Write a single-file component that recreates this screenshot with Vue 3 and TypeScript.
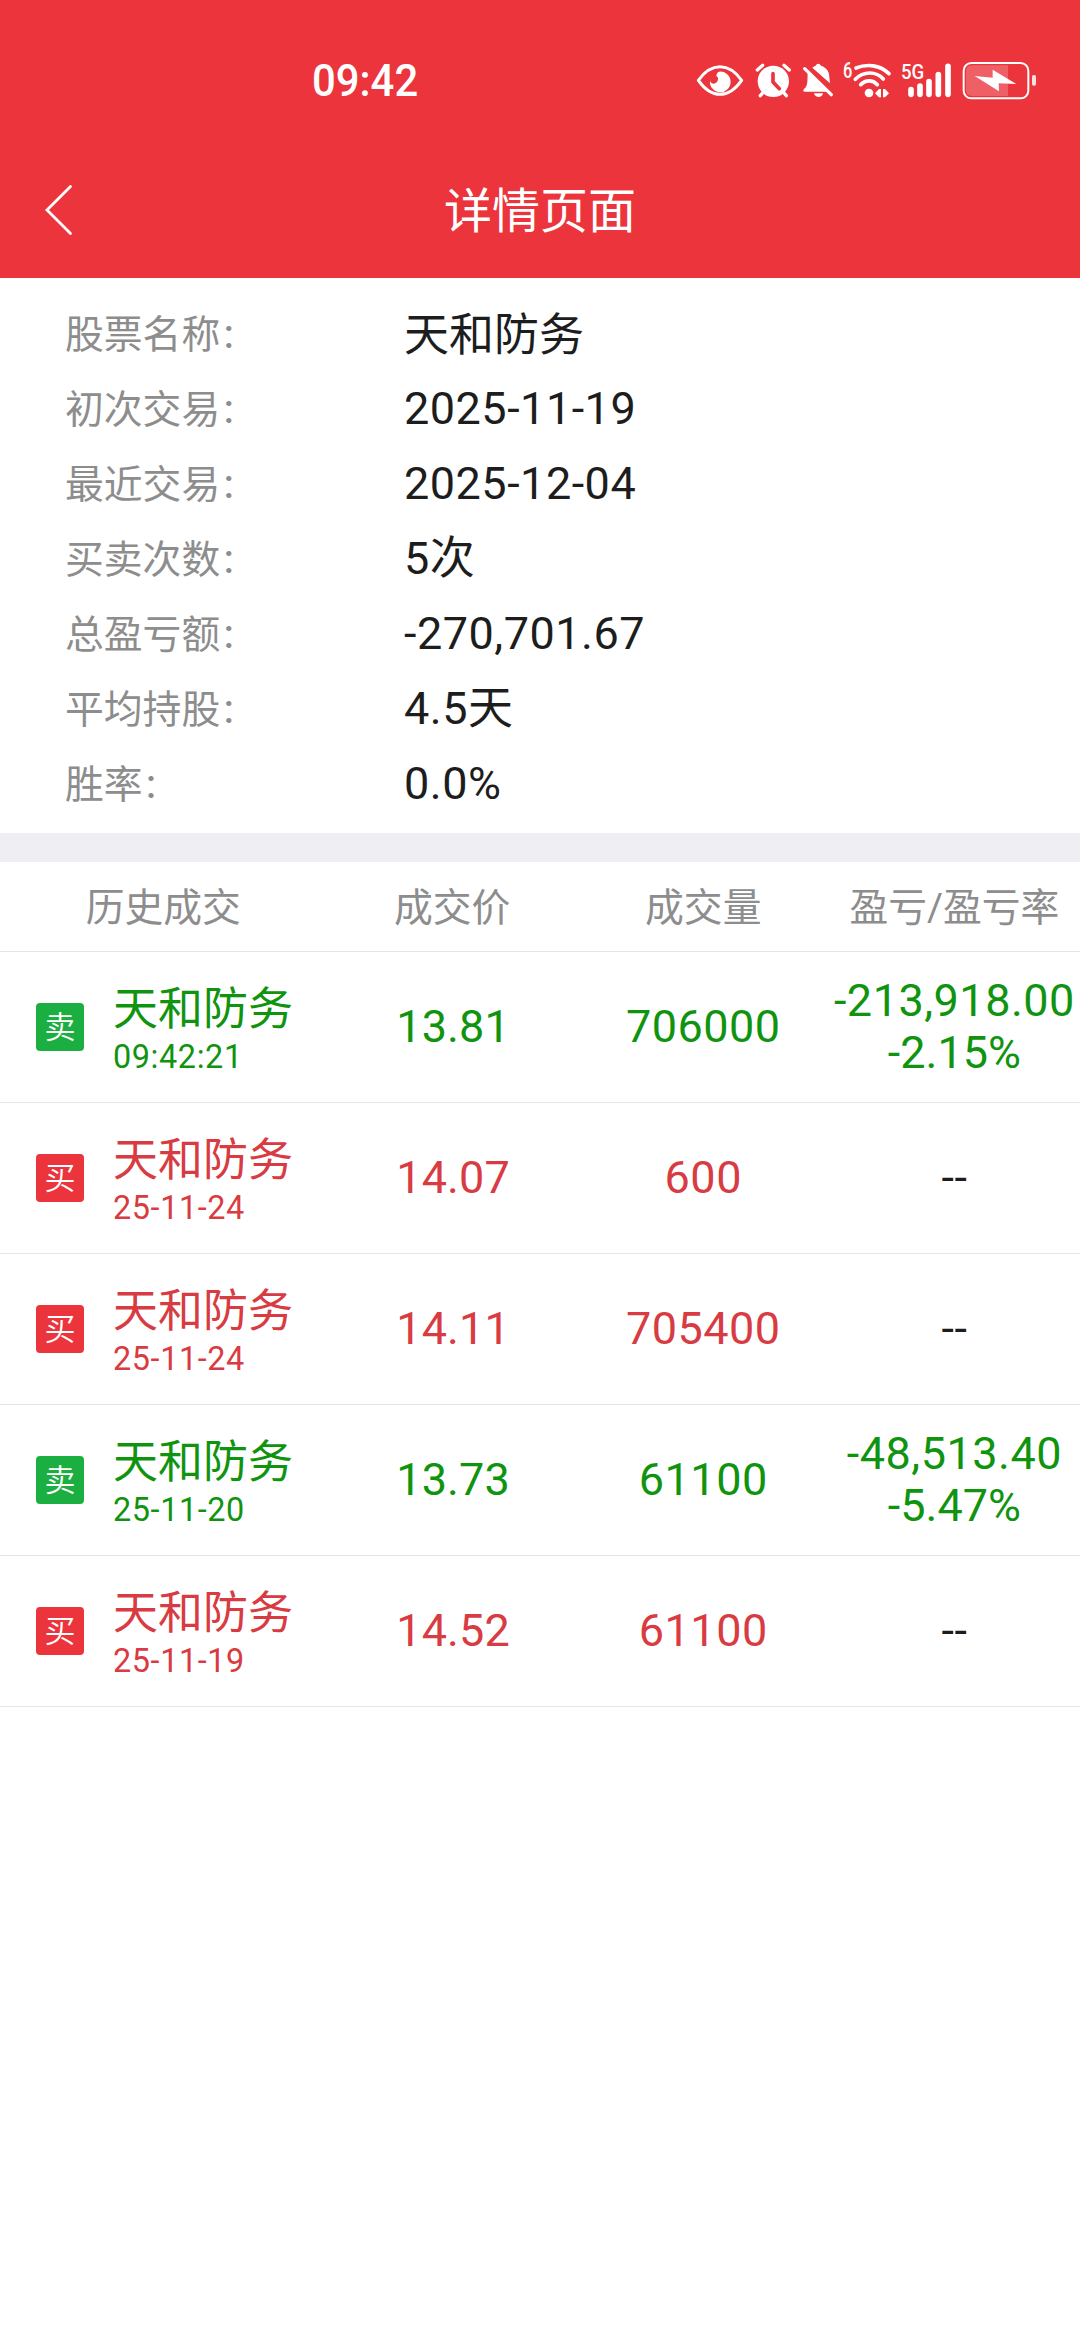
<script setup lang="ts">
interface InfoItem {
  label: string
  value: string
  han?: boolean
}

interface Trade {
  side: 'buy' | 'sell'
  name: string
  time: string
  price: string
  volume: string
  profit?: string
  rate?: string
}

const info: InfoItem[] = [
  { label: '股票名称', value: '天和防务', han: true },
  { label: '初次交易', value: '2025-11-19' },
  { label: '最近交易', value: '2025-12-04' },
  { label: '买卖次数', value: '5次' },
  { label: '总盈亏额', value: '-270,701.67' },
  { label: '平均持股', value: '4.5天' },
  { label: '胜率', value: '0.0%' },
]

const columns: string[] = ['历史成交', '成交价', '成交量', '盈亏/盈亏率']

const trades: Trade[] = [
  { side: 'sell', name: '天和防务', time: '09:42:21', price: '13.81', volume: '706000', profit: '-213,918.00', rate: '-2.15%' },
  { side: 'buy', name: '天和防务', time: '25-11-24', price: '14.07', volume: '600' },
  { side: 'buy', name: '天和防务', time: '25-11-24', price: '14.11', volume: '705400' },
  { side: 'sell', name: '天和防务', time: '25-11-20', price: '13.73', volume: '61100', profit: '-48,513.40', rate: '-5.47%' },
  { side: 'buy', name: '天和防务', time: '25-11-19', price: '14.52', volume: '61100' },
]
</script>

<template>
  <div class="screen">
    <header class="top">
      <div class="status">
        <span class="clock">09:42</span>
        <div class="icons">
          <svg class="eye" viewBox="48 60 144 124">
            <path d="M55 121 C74 94 96 80 120 80 C144 80 166 94 185 121 C166 148 144 163 120 163 C96 163 74 148 55 121Z" fill="none" stroke="#fff" stroke-width="9" stroke-linejoin="round" />
            <path d="M117 95 A31 31 0 1 1 90 122 C93 132 103 134 110 127 C117 119 115 111 109 109 C109 103 111 98 117 95Z" fill="#fff" />
          </svg>
          <svg class="alarm" viewBox="224 60 110 124">
            <circle cx="279" cy="124" r="47" fill="#fff" />
            <path d="M231 90 L247 76 M327 90 L311 76 M250 156 L240 167 M308 156 L318 167" stroke="#fff" stroke-width="10" stroke-linecap="round" />
            <path d="M278 101 V126 L297 146" fill="none" stroke="#eb343b" stroke-width="11" stroke-linecap="round" stroke-linejoin="round" />
          </svg>
          <svg class="bell" viewBox="366 60 96 124">
            <path d="M397 83 C401 79 404 78 407 77 C410 69 420 69 423 77 C441 83 448 96 448 112 L450 130Z" fill="#fff" />
            <path d="M383 98 L440 155 H374 C367 154 370 147 376 143 C384 135 382 116 383 98Z" fill="#fff" />
            <path d="M402 160 H429 C426 175 406 175 402 160Z" fill="#fff" />
            <path d="M374 86 L454 164" stroke="#fff" stroke-width="10" stroke-linecap="round" />
          </svg>
          <svg class="wifi" viewBox="486 60 150 124">
            <text x="489" y="114" font-size="64" textLength="28" lengthAdjust="spacingAndGlyphs" class="tag">6</text>
            <g fill="none" stroke="#fff" stroke-width="11" stroke-linecap="round">
              <path d="M528 84 C560 71 600 74 627 101" />
              <path d="M526 118 C550 93 588 93 610 117" />
              <path d="M542 134 C557 119 578 119 592 134" />
            </g>
            <circle cx="567" cy="159" r="13" fill="#fff" />
            <path d="M585 160 L597 147 H603 V172 H597Z M627 160 L615 172 H609 V147 H615Z" fill="#fff" />
          </svg>
          <svg class="signal" viewBox="660 60 156 124">
            <text x="663" y="118" font-size="63" textLength="70" lengthAdjust="spacingAndGlyphs" class="tag">5G</text>
            <path d="M693 149 V163 M720 138 V163 M747 125 V163 M775 104 V163 M804 79 V163" stroke="#fff" stroke-width="17" stroke-linecap="round" />
          </svg>
          <svg class="battery" viewBox="846 60 224 124">
            <path d="M984 76 V168 H876 Q858 168 858 150 V94 Q858 76 876 76Z" fill="#fff" fill-opacity=".22" />
            <rect x="851" y="69" width="194" height="106" rx="23" fill="none" stroke="#fff" stroke-width="6" />
            <rect x="1056" y="105" width="12" height="32" rx="5" fill="#fff" fill-opacity=".85" />
            <path d="M884 108 L938 113 L938 89 L1009 132 L956 130 L957 154Z" fill="#fff" />
          </svg>
        </div>
      </div>
      <div class="nav">
        <svg class="back" viewBox="0 0 30 54">
          <path d="M26.5 3.5 L3 27 L26.5 50.5" fill="none" stroke="#fff" stroke-width="2.8" stroke-linecap="round" />
        </svg>
        <h1 class="title">详情页面</h1>
      </div>
    </header>

    <dl class="info">
      <div v-for="item in info" :key="item.label" class="info-row">
        <dt>{{ item.label }}<span class="colon">：</span></dt>
        <dd :class="{ han: item.han }">{{ item.value }}</dd>
      </div>
    </dl>

    <div class="divider"></div>

    <section class="table">
      <div class="row head">
        <span v-for="c in columns" :key="c">{{ c }}</span>
      </div>
      <div v-for="(t, i) in trades" :key="i" class="row item" :class="t.side">
        <div class="stock">
          <span class="badge">{{ t.side === 'sell' ? '卖' : '买' }}</span>
          <div class="stock-text">
            <span class="name">{{ t.name }}</span>
            <span class="time">{{ t.time }}</span>
          </div>
        </div>
        <span class="num price">{{ t.price }}</span>
        <span class="num">{{ t.volume }}</span>
        <div v-if="t.profit" class="num profit">
          <span>{{ t.profit }}</span>
          <span class="rate">{{ t.rate }}</span>
        </div>
        <span v-else class="num none">--</span>
      </div>
    </section>
  </div>
</template>

<style>
body {
  margin: 0;
  background: #fff;
}
</style>

<style scoped>
.screen {
  width: 1080px;
  height: 2340px;
  overflow: hidden;
  background: #fff;
  color: #1d1d1d;
  font-family: Roboto, 'Noto Sans CJK SC', sans-serif;
}

.top {
  height: 278px;
  background: #eb343b;
  color: #fff;
}

.status {
  display: flex;
  align-items: center;
  justify-content: space-between;
  height: 142px;
  padding: 20px 43px 0 312px;
  box-sizing: border-box;
}

.clock {
  font-size: 45px;
  font-weight: 500;
  line-height: 60px;
  transform: scaleX(0.93);
  transform-origin: left;
}

.icons {
  display: flex;
  align-items: center;
}

.icons svg {
  height: 41.33px;
  overflow: visible;
}

.tag {
  fill: #fff;
  font-family: Roboto, sans-serif;
  font-weight: 500;
}

.eye { width: 48px; }
.alarm { width: 36.67px; margin-left: 10.67px; }
.bell { width: 32px; margin-left: 10.67px; }
.wifi { width: 50px; margin-left: 8px; }
.signal { width: 52px; margin-left: 8px; }
.battery { width: 74.67px; margin-left: 10px; }

.nav {
  display: grid;
  grid-template-columns: 90px 1fr 90px;
  align-items: center;
  height: 136px;
}

.back {
  width: 30px;
  height: 54px;
  margin-left: 44px;
}

.title {
  margin: 0;
  padding-top: 4px;
  font-size: 48px;
  font-weight: 400;
  line-height: 64px;
  text-align: center;
}

.info {
  height: 555px;
  margin: 0;
  padding: 18px 65px 0;
  box-sizing: border-box;
}

.info-row {
  display: grid;
  grid-template-columns: 339px 1fr;
  align-items: center;
  height: 75px;
}

.info-row dt {
  color: #8d8d8d;
  font-size: 38.8px;
  line-height: 50px;
  padding-top: 3px;
}

.colon {
  font-size: 34px;
  line-height: 1;
}

.info-row dd {
  margin: 0;
  font-size: 45px;
  line-height: 60px;
  letter-spacing: 0.5px;
}

.info-row dd.han {
  padding-top: 4px;
  letter-spacing: 0;
}

.divider {
  height: 29px;
  background: #efeef3;
}

.row {
  display: grid;
  grid-template-columns: 1.3fr 1fr 1fr 1fr;
  align-items: center;
  border-bottom: 1px solid #e5e5e5;
  text-align: center;
}

.head {
  height: 89px;
  color: #8d8d8d;
  font-size: 38.8px;
  line-height: 53px;
}

.head span {
  padding-top: 2px;
}

.item {
  height: 150px;
}

.sell { color: #109410; }
.buy { color: #d83b41; }

.stock {
  display: flex;
  align-items: center;
  padding-left: 36px;
  text-align: left;
}

.badge {
  width: 48px;
  height: 48px;
  border-radius: 4px;
  color: #fff;
  font-size: 31px;
  font-weight: 350;
  line-height: 49px;
  text-align: center;
}

.sell .badge { background: #1bae41; }
.buy .badge { background: #eb343b; }

.stock-text {
  display: flex;
  flex-direction: column;
  margin-left: 29px;
  padding-top: 6px;
}

.name {
  font-size: 45px;
  line-height: 54px;
}

.time {
  font-size: 32.4px;
  line-height: 40px;
  letter-spacing: 0.6px;
}

.num {
  font-size: 45px;
  line-height: 52px;
  letter-spacing: 0.5px;
}

.price {
  padding-left: 2px;
  letter-spacing: 0.1px;
}

.profit {
  display: flex;
  flex-direction: column;
}

.rate {
  letter-spacing: 0;
}

.none {
  color: #1d1d1d;
}
</style>
